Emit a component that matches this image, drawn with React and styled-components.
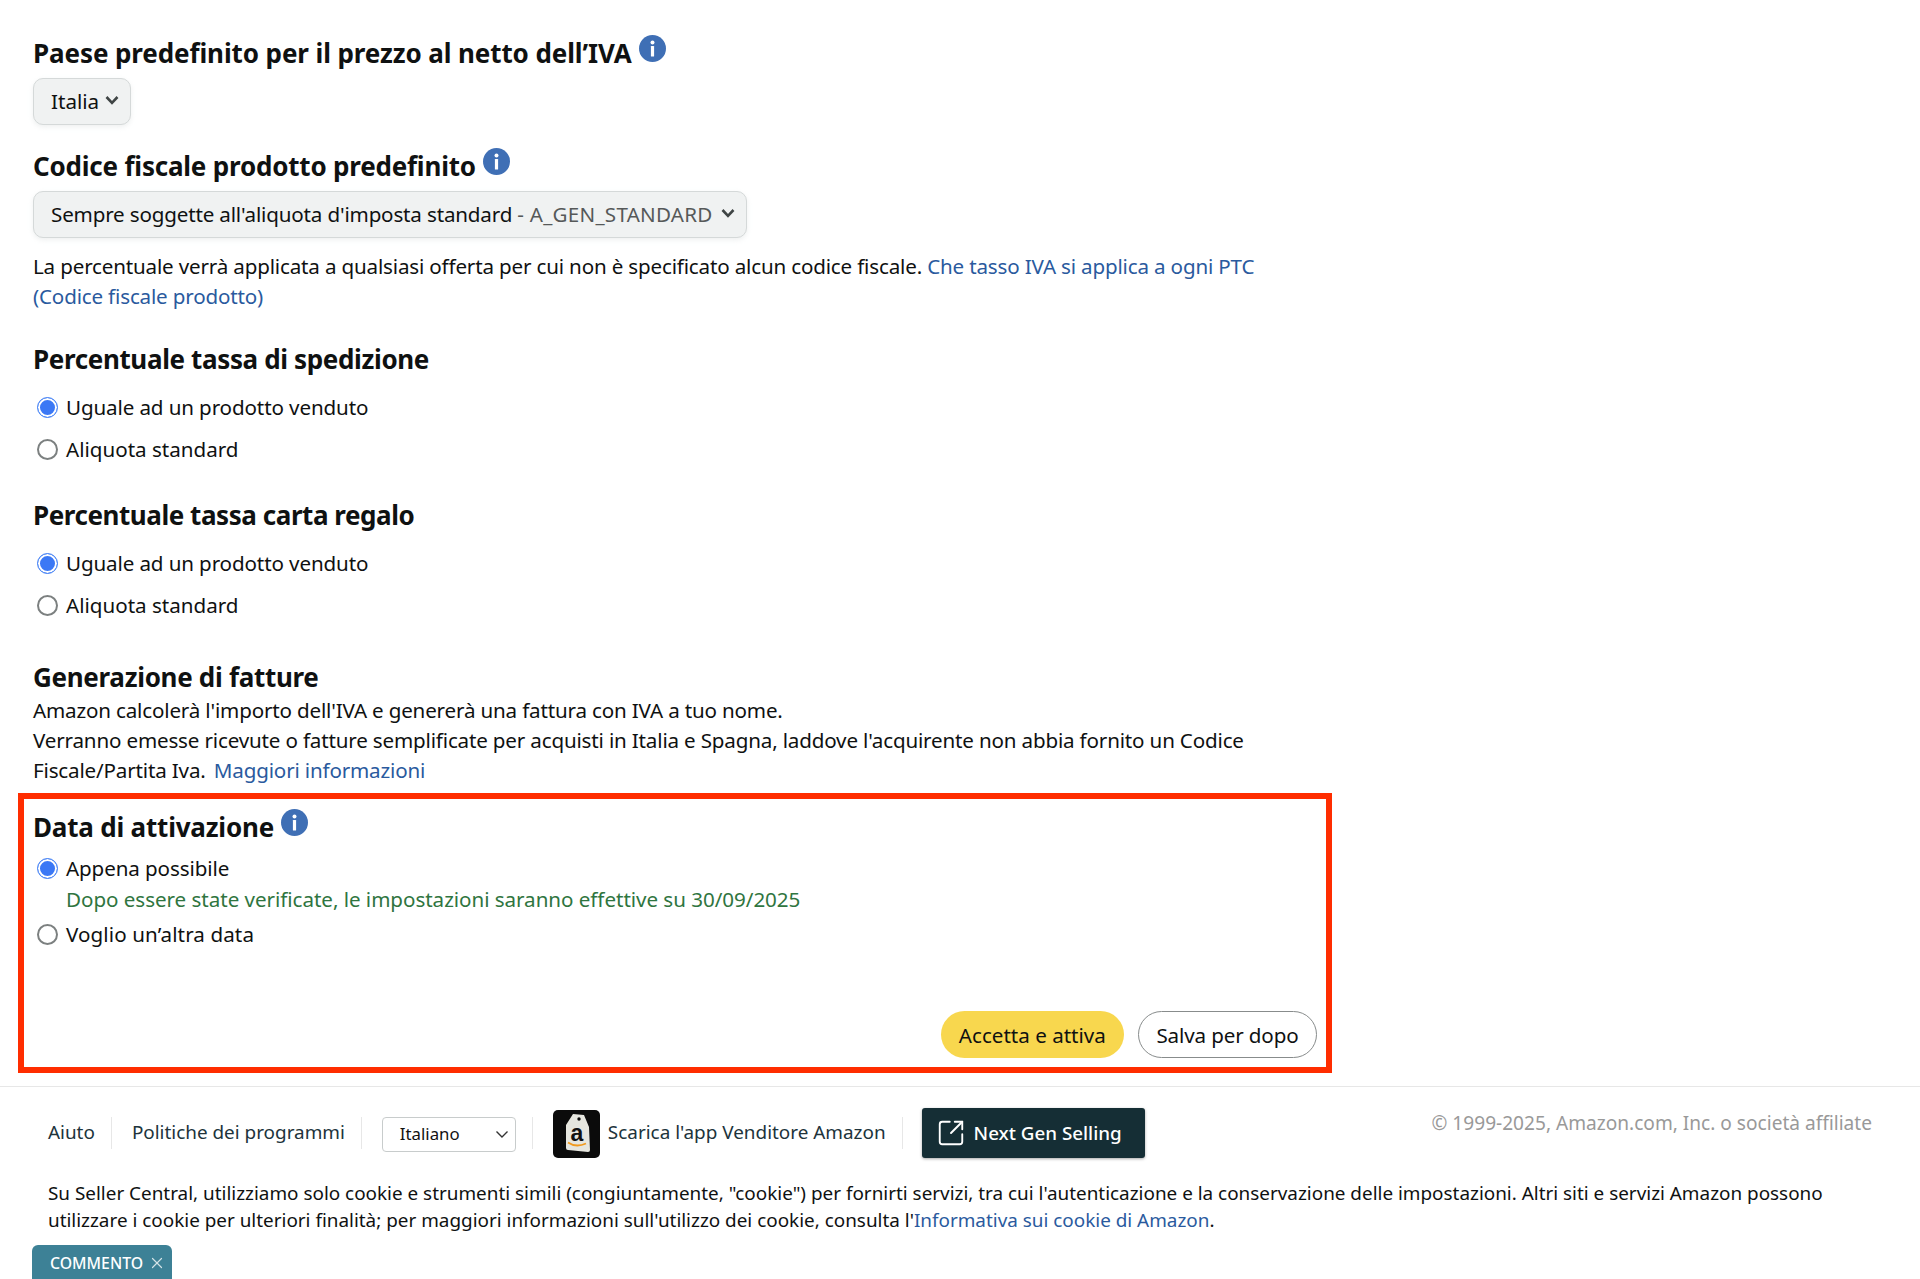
import styled, { createGlobalStyle } from "styled-components";
import { SquareArrowOutUpRight, X } from "lucide-react";

const GlobalStyle = createGlobalStyle`
  html, body {
    margin: 0;
    padding: 0;
    height: 1279px;
    overflow: hidden;
    background: #fff;
  }
  body {
    font-family: "Noto Sans", "Open Sans", sans-serif;
    font-size: 20.6px;
    line-height: 30px;
    color: #0f1111;
  }
`;

const InfoIcon = () => (
  <InfoSvg viewBox="0 0 27 27">
    <circle cx="13.5" cy="13.5" r="13.5" fill="#3f6fb5" />
    <circle cx="13.5" cy="7.4" r="2" fill="#fff" />
    <rect x="11.9" y="11" width="3.2" height="10.5" rx="0.6" fill="#fff" />
  </InfoSvg>
);

const Chevron = () => (
  <ChevronSvg viewBox="0 0 14 10">
    <path d="M1.5 2 L7 7.8 L12.5 2" fill="none" stroke="#3f4545" strokeWidth="2.6" />
  </ChevronSvg>
);

const Radio = ({ checked, tracking, children }) => (
  <RadioRow $tracking={tracking}>
    <RadioMark $checked={checked} />
    {children}
  </RadioRow>
);

export default function App() {
  return (
    <>
      <GlobalStyle />
      <Main>
        <Heading $tracking={-0.1}>
          Paese predefinito per il prezzo al netto dell’IVA
          <InfoIcon />
        </Heading>
        <SelectBox>
          Italia
          <Chevron />
        </SelectBox>

        <Heading $top={23}>
          Codice fiscale prodotto predefinito
          <InfoIcon />
        </Heading>
        <SelectBox $tracking={-0.17} $wide>
          Sempre soggette all'aliquota d'imposta standard <Muted>- A_GEN_STANDARD</Muted>
          <Chevron />
        </SelectBox>
        <Paragraph $top={13}>
          La percentuale verrà applicata a qualsiasi offerta per cui non è specificato alcun codice
          fiscale. <TextLink>Che tasso IVA si applica a ogni PTC</TextLink>
          <br />
          <TextLink>(Codice fiscale prodotto)</TextLink>
        </Paragraph>

        <Heading $top={30} $tracking={-0.36}>
          Percentuale tassa di spedizione
        </Heading>
        <RadioGroup>
          <Radio checked tracking={-0.12}>Uguale ad un prodotto venduto</Radio>
          <Radio>Aliquota standard</Radio>
        </RadioGroup>

        <Heading $top={33} $tracking={-0.44}>
          Percentuale tassa carta regalo
        </Heading>
        <RadioGroup>
          <Radio checked tracking={-0.12}>Uguale ad un prodotto venduto</Radio>
          <Radio>Aliquota standard</Radio>
        </RadioGroup>

        <Heading $top={39} $tracking={-0.3}>
          Generazione di fatture
        </Heading>
        <Paragraph>
          Amazon calcolerà l'importo dell'IVA e genererà una fattura con IVA a tuo nome.
          <br />
          Verranno emesse ricevute o fatture semplificate per acquisti in Italia e Spagna, laddove
          l'acquirente non abbia fornito un Codice
          <br />
          Fiscale/Partita Iva. <LeadLink>Maggiori informazioni</LeadLink>
        </Paragraph>

        <Highlight>
          <Heading>
            Data di attivazione
            <InfoIcon />
          </Heading>
          <ActivationOptions>
            <Radio checked tracking={-0.1}>Appena possibile</Radio>
            <Success>Dopo essere state verificate, le impostazioni saranno effettive su 30/09/2025</Success>
            <Radio tracking={0.1}>Voglio un’altra data</Radio>
          </ActivationOptions>
          <Actions>
            <PrimaryButton>Accetta e attiva</PrimaryButton>
            <SecondaryButton>Salva per dopo</SecondaryButton>
          </Actions>
        </Highlight>
      </Main>

      <Footer>
        <FooterTop>
          <FooterLinks>
            <FooterItem>Aiuto</FooterItem>
            <FooterItem>Politiche dei programmi</FooterItem>
            <FooterItem>
              <LanguageSelect>
                Italiano
                <svg width="14" height="9" viewBox="0 0 14 9">
                  <path d="M1.5 1.5 L7 7 L12.5 1.5" fill="none" stroke="#333" strokeWidth="1.4" />
                </svg>
              </LanguageSelect>
            </FooterItem>
            <FooterItem>
              <AppIcon viewBox="0 0 47 48">
                <rect width="47" height="48" rx="5" fill="#0b0b0b" />
                <path d="M20 4 L31 5 L36 17 L37 40 Q37 42 35 42 L15 40 Q13 40 13 38 L13 15 Z" fill="#e6e6df" />
                <circle cx="26" cy="9" r="1.7" fill="#0b0b0b" />
                <text x="24" y="31" textAnchor="middle" fontFamily="Liberation Sans" fontWeight="700" fontSize="23" fill="#111">a</text>
                <path d="M15 32.5 Q23 38 33 33.5" fill="none" stroke="#f19a1e" strokeWidth="1.8" />
              </AppIcon>
              <AppLabel>Scarica l'app Venditore Amazon</AppLabel>
            </FooterItem>
            <LastItem>
              <NextGenButton>
                <SquareArrowOutUpRight size={30} strokeWidth={1.5} />
                Next Gen Selling
              </NextGenButton>
            </LastItem>
          </FooterLinks>
          <Copyright>© 1999-2025, Amazon.com, Inc. o società affiliate</Copyright>
        </FooterTop>
        <CookieNote>
          Su Seller Central, utilizziamo solo cookie e strumenti simili (congiuntamente, "cookie") per
          fornirti servizi, tra cui l'autenticazione e la conservazione delle impostazioni. Altri siti
          e servizi Amazon possono
          <br />
          utilizzare i cookie per ulteriori finalità; per maggiori informazioni sull'utilizzo dei
          cookie, consulta l'<TextLink>Informativa sui cookie di Amazon</TextLink>.
        </CookieNote>
      </Footer>

      <FeedbackTab>
        COMMENTO
        <X size={18} strokeWidth={1.6} color="#d3e2e6" />
      </FeedbackTab>
    </>
  );
}

const Main = styled.main`
  padding: 35px 0 0 33px;
  width: 1300px;
`;

const Heading = styled.h2`
  display: flex;
  align-items: center;
  gap: 7px;
  height: 36px;
  margin: ${(p) => p.$top || 0}px 0 0;
  font-size: 26px;
  line-height: 36px;
  font-weight: 700;
  letter-spacing: ${(p) => p.$tracking ?? -0.2}px;
  white-space: nowrap;
`;

const InfoSvg = styled.svg`
  flex: none;
  width: 27px;
  height: 27px;
  margin-bottom: 10px;
`;

const ChevronSvg = styled.svg`
  position: absolute;
  right: 11px;
  top: 16px;
  width: 14px;
  height: 10px;
`;

const SelectBox = styled.div`
  position: relative;
  display: block;
  width: fit-content;
  box-sizing: border-box;
  height: 47px;
  margin-top: 7px;
  padding: 0 ${(p) => (p.$wide ? 33 : 31)}px 0 17px;
  line-height: 45px;
  letter-spacing: ${(p) => p.$tracking || 0}px;
  background: #f0f2f2;
  border: 1.5px solid #d5d9d9;
  border-radius: 10px;
  box-shadow: 0 2px 5px rgba(213, 217, 217, 0.4);
  white-space: nowrap;
`;

const Muted = styled.span`
  color: #565959;
  letter-spacing: 0.25px;
`;

const Paragraph = styled.p`
  margin: ${(p) => p.$top || 0}px 0 0;
  letter-spacing: -0.17px;
  white-space: nowrap;
`;

const TextLink = styled.a`
  color: #2a5a9e;
`;

const LeadLink = styled(TextLink)`
  margin-left: 3px;
`;

const RadioGroup = styled.div`
  display: flex;
  flex-direction: column;
  gap: 12px;
  margin-top: 15px;
`;

const RadioRow = styled.label`
  display: flex;
  align-items: center;
  height: 30px;
  gap: 8px;
  letter-spacing: ${(p) => p.$tracking || 0}px;
  white-space: nowrap;
`;

const RadioMark = styled.span`
  box-sizing: border-box;
  flex: none;
  width: 21px;
  height: 21px;
  margin-left: 4px;
  border-radius: 50%;
  border: ${(p) => (p.$checked ? "1.5px solid #4a86f5" : "2px solid #7c8080")};
  background: ${(p) => (p.$checked ? "#3b78f5" : "#fff")};
  box-shadow: ${(p) => (p.$checked ? "inset 0 0 0 2px #fff" : "none")};
`;

const Highlight = styled.section`
  box-sizing: border-box;
  width: 1314px;
  height: 280px;
  margin: 8px 0 0 -15px;
  padding: 10px 9px 9px 9px;
  border: 6px solid #ff2d00;
  display: flex;
  flex-direction: column;
`;

const ActivationOptions = styled.div`
  display: flex;
  flex-direction: column;
  margin-top: 8px;
`;

const Success = styled.div`
  margin: 1px 0 5px 33px;
  color: #2f7540;
  letter-spacing: -0.04px;
  white-space: nowrap;
`;

const Actions = styled.div`
  display: flex;
  justify-content: flex-end;
  gap: 14px;
  margin-top: auto;
`;

const PrimaryButton = styled.button`
  box-sizing: border-box;
  height: 47px;
  padding: 0 18px;
  border: none;
  border-radius: 24px;
  background: #f8d74e;
  color: #0f1111;
  font: inherit;
`;

const SecondaryButton = styled.button`
  box-sizing: border-box;
  height: 47px;
  padding: 0 17.5px;
  border: 1.5px solid #888c8c;
  border-radius: 24px;
  background: #fff;
  color: #0f1111;
  font: inherit;
  letter-spacing: -0.13px;
`;

const Footer = styled.footer`
  margin-top: 13px;
  border-top: 1.5px solid #e7e7e7;
  padding: 21px 48px 0;
`;

const FooterTop = styled.div`
  display: flex;
  justify-content: space-between;
  align-items: flex-start;
  height: 50px;
`;

const FooterLinks = styled.div`
  display: flex;
  align-items: center;
  height: 50px;
  font-size: 18.9px;
  color: #20333b;
`;

const FooterItem = styled.div`
  display: flex;
  align-items: center;
  box-sizing: border-box;
  height: 32px;
  padding: 0 16px 2px 0;
  margin-right: 20px;
  border-right: 1.5px solid #e7e7e7;
  white-space: nowrap;
`;

const LastItem = styled.div`
  display: flex;
  margin-left: -1px;
`;

const LanguageSelect = styled.div`
  display: flex;
  flex: none;
  align-items: center;
  justify-content: space-between;
  box-sizing: border-box;
  width: 134px;
  height: 35px;
  margin-top: 4px;
  padding: 0 6px 0 17px;
  border: 1.5px solid #c8cccc;
  border-radius: 4px;
  font-size: 16.8px;
  color: #111;
`;

const AppIcon = styled.svg`
  flex: none;
  width: 47px;
  height: 48px;
  margin: 3px 8px 0 0;
`;

const AppLabel = styled.span``;

const NextGenButton = styled.div`
  display: flex;
  align-items: center;
  gap: 8px;
  box-sizing: border-box;
  width: 223px;
  height: 50px;
  padding-left: 14px;
  background: #152e35;
  color: #fff;
  font-size: 18.8px;
  font-weight: 500;
  border-radius: 3px;
  box-shadow: 0 1px 3px rgba(0, 0, 0, 0.35);
  white-space: nowrap;
`;

const Copyright = styled.div`
  color: #999;
  font-size: 19.1px;
  white-space: nowrap;
`;

const CookieNote = styled.p`
  margin: 22px 0 0;
  line-height: 27px;
  font-size: 18.9px;
  white-space: nowrap;
`;

const FeedbackTab = styled.div`
  position: fixed;
  left: 32px;
  bottom: 0;
  display: flex;
  align-items: center;
  gap: 5px;
  box-sizing: border-box;
  width: 140px;
  height: 34px;
  padding: 1px 0 0 18px;
  background: #3d8196;
  color: #fff;
  border-radius: 6px 6px 0 0;
  font-size: 15.8px;
  font-weight: 500;
`;
